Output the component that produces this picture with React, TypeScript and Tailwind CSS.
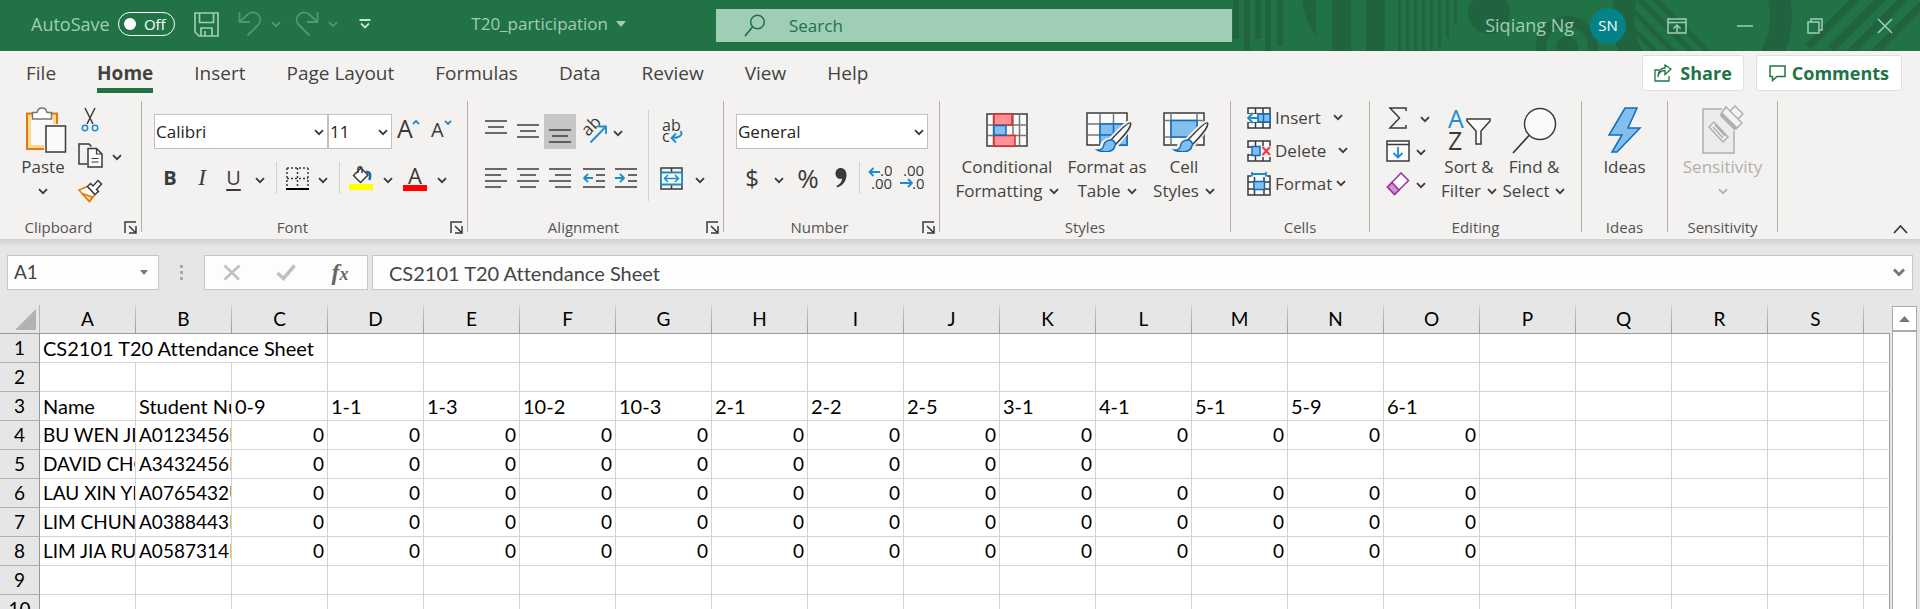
import React from "react";

const INK = "#3b3a39";
const BLUE = "#1e8bcd";

type IconProps = { w: number; h: number; children: React.ReactNode; className?: string };

function Icon({ w, h, children, className = "" }: IconProps) {
  return (
    <svg
      width={w}
      height={h}
      viewBox={`0 0 ${w} ${h}`}
      fill="none"
      stroke={INK}
      strokeWidth="1.5"
      className={`shrink-0 ${className}`}
      aria-hidden="true"
    >
      {children}
    </svg>
  );
}

function Chevron({ color = INK, className = "" }: { color?: string; className?: string }) {
  return (
    <Icon w={10} h={7} className={className}>
      <path d="M1 1.200 5 5.200 9 1.200" stroke={color} strokeWidth="1.800" />
    </Icon>
  );
}

function Drop({ label, className = "w-[22px]" }: { label: string; className?: string }) {
  return (
    <button type="button" aria-label={label} className={`flex h-8 shrink-0 items-center justify-center pt-1 ${className}`}>
      <Chevron />
    </button>
  );
}

function Tool({ label, className = "w-8", children }: { label: string; className?: string; children: React.ReactNode }) {
  return (
    <button type="button" aria-label={label} className={`flex h-8 shrink-0 items-center justify-center ${className}`}>
      {children}
    </button>
  );
}

function Launcher({ name }: { name: string }) {
  return (
    <button type="button" aria-label={`${name} settings`} className="flex h-5 w-6 shrink-0 items-center pl-[7px]">
      <Icon w={13} h={13}>
        <path d="M1 12V1h11M12 5v7H5M5 5l6 6" />
      </Icon>
    </button>
  );
}

type GroupProps = {
  name: string;
  width: string;
  launcher?: boolean;
  children: React.ReactNode;
};

function Group({ name, width, launcher = false, children }: GroupProps) {
  return (
    <>
      <section aria-label={name} className={`flex shrink-0 flex-col ${width}`}>
        <div className="h-[116px]">{children}</div>
        <div className="flex h-5 items-center">
          <span className="flex-1 text-center text-[15px] leading-5 text-[#555453]">{name}</span>
          {launcher && <Launcher name={name} />}
        </div>
      </section>
      <div className="h-[131px] w-px shrink-0 bg-[#b3b0ad]" />
    </>
  );
}

type BigProps = {
  lines: string[];
  width: string;
  icon: React.ReactNode;
  drop?: "inline" | "below";
  disabled?: boolean;
};

function BigButton({ lines, width, icon, drop, disabled = false }: BigProps) {
  return (
    <button
      type="button"
      disabled={disabled}
      className={`flex shrink-0 flex-col items-center pt-[6px] text-[17px] leading-6 whitespace-nowrap ${width} ${
        disabled ? "text-[#b1afad]" : "text-[#444342]"
      }`}
    >
      <span className="mb-[2px] flex h-[46px] items-center justify-center">{icon}</span>
      {lines.map((line, i) => (
        <span key={line} className="flex items-center gap-[6px]">
          {line}
          {drop === "inline" && i === lines.length - 1 && <Chevron />}
        </span>
      ))}
      {drop === "below" && (
        <span className="flex h-6 items-center">
          <Chevron color={disabled ? "#b1afad" : INK} />
        </span>
      )}
    </button>
  );
}

function Combo({ label, value, width }: { label: string; value: string; width: string }) {
  return (
    <div className={`relative h-[35px] shrink-0 ${width}`}>
      <select
        aria-label={label}
        className="h-full w-full appearance-none border border-[#c3c1bf] bg-white px-px text-[17px] text-[#252423]"
      >
        <option>{value}</option>
      </select>
      <Chevron className="pointer-events-none absolute top-[15px] right-1" />
    </div>
  );
}

function Lines({ rows, w = 22, h = 22 }: { rows: [number, number, number][]; w?: number; h?: number }) {
  return (
    <Icon w={w} h={h}>
      {rows.map(([x1, x2, y]) => (
        <path key={y} d={`M${x1} ${y}H${x2}`} />
      ))}
    </Icon>
  );
}

function TitlePattern() {
  const bars = [
    [1, 6, 39], [12, 6, 50], [23, 6, 39], [33, 6, 51], [45, 6, 46],
    [100, 19, 51], [134, 19, 51],
    [166, 3, 51], [174, 3, 51], [182, 3, 51], [190, 3, 51], [198, 3, 51], [206, 3, 47], [214, 3, 38], [222, 3, 23],
  ];
  return (
    <svg width="688" height="51" viewBox="0 0 688 51" className="absolute top-0 left-0" aria-hidden="true">
      <g fill="#22633f">
        {bars.map(([x, w, h]) => (
          <rect key={x} x={x} y="0" width={w} height={h} />
        ))}
        <path d="M70 0H84V36C77 27 72 14 70 0Z" />
        <circle cx="257" cy="13" r="21" />
        <circle cx="335" cy="47" r="11" />
      </g>
      <g fill="none" stroke="#22633f">
        <circle cx="335" cy="47" r="26" strokeWidth="10" />
        <circle cx="470" cy="17" r="79" strokeWidth="22" />
        <path d="M400 10 443 53M400-8 461 53M416-8 477 53M394 22 425 53" strokeWidth="5" />
        <path d="M576 47 626-3M599 49 651-3M618 53 674-3M642 53 690 5" strokeWidth="8" />
      </g>
    </svg>
  );
}

function TitleBar() {
  return (
    <header className="grid h-[51px] shrink-0 grid-cols-[716fr_516fr_688fr] items-center bg-[#217346] text-[17px] text-[#a0cdb5]">
      <div className="flex items-center pb-[3px]">
        <label className="ml-[31px] flex items-center gap-2 text-[18px]">
          AutoSave
          <input type="checkbox" role="switch" className="peer sr-only" />
          <span className="flex h-6 w-[57px] items-center justify-between rounded-full border-[1.5px] border-white pr-2 pl-[5px] text-[15px] text-white">
            <span className="size-3 rounded-full bg-white" />
            Off
          </span>
        </label>
        <button type="button" aria-label="Save" className="ml-[19px]">
          <Icon w={25} h={25}>
            <path d="M1 1H24V24H5L1 20ZM5.500 1V10.500H19.500V1M7 24V16H18V24M11 24V19" stroke="#a0cdb5" strokeWidth="1.700" />
          </Icon>
        </button>
        <button type="button" aria-label="Undo" className="ml-[19px] flex items-center gap-[9px]">
          <Icon w={24} h={26}>
            <path d="M1.500 1V11H12M2 10.500 9 4C13 0 18 1 20.500 4C23 7 23 11 20 14L9.500 24.500" stroke="#4c9a6e" strokeWidth="1.800" />
          </Icon>
          <Chevron color="#4c9a6e" />
        </button>
        <button type="button" aria-label="Redo" className="ml-[14px] flex items-center gap-[9px]">
          <Icon w={24} h={26}>
            <path d="M22.500 1V11H12M22 10.500 15 4C11 0 6 1 3.500 4C1 7 1 11 4 14L14.500 24.500" stroke="#4c9a6e" strokeWidth="1.800" />
          </Icon>
          <Chevron color="#4c9a6e" />
        </button>
        <button type="button" aria-label="Customize toolbar" className="ml-[21px]">
          <Icon w={12} h={10}>
            <path d="M0.500 1H11.500M2 4.500 6 8.500 10 4.500" stroke="#c4e2d0" strokeWidth="1.800" />
          </Icon>
        </button>
        <button type="button" className="mr-[90px] ml-auto flex items-center gap-2">
          T20_participation
          <Icon w={10} h={6}>
            <path d="M0 0H10L5 6Z" fill="#a0cdb5" stroke="none" />
          </Icon>
        </button>
      </div>
      <label className="flex h-[33px] items-center gap-[23px] bg-[#a0cdb5] pl-7">
        <Icon w={22} h={23}>
          <circle cx="13.500" cy="8" r="6.800" stroke="#217346" />
          <path d="M8.500 13 1 22" stroke="#217346" strokeWidth="1.800" />
        </Icon>
        <input
          type="search"
          aria-label="Search"
          placeholder="Search"
          className="min-w-0 flex-1 bg-transparent text-[17px] text-[#217346] outline-none placeholder:text-[#217346]"
        />
      </label>
      <div className="relative h-full overflow-hidden">
        <TitlePattern />
        <div className="relative flex h-full items-center justify-end">
          <span className="text-[18px]">Siqiang Ng</span>
          <span className="mr-[18px] ml-4 flex size-9 items-center justify-center rounded-full bg-[#038387] text-[15px] text-white">
            SN
          </span>
          <button type="button" aria-label="Ribbon display options" className="flex w-[66px] justify-center">
            <Icon w={20} h={16}>
              <path d="M1 1H19V15H1ZM1 4.500H19M10 14V7.500M6.500 10.500 10 7 13.500 10.500" stroke="#a0cdb5" />
            </Icon>
          </button>
          <button type="button" aria-label="Minimize" className="flex w-[70px] justify-center">
            <Icon w={16} h={2}>
              <path d="M0 1H16" stroke="#a0cdb5" />
            </Icon>
          </button>
          <button type="button" aria-label="Restore" className="flex w-[70px] justify-center">
            <Icon w={16} h={16}>
              <path d="M1 4H12V15H1ZM4 4V1H15V12H12" stroke="#a0cdb5" />
            </Icon>
          </button>
          <button type="button" aria-label="Close" className="flex w-[70px] justify-center">
            <Icon w={16} h={16}>
              <path d="M1 1 15 15M15 1 1 15" stroke="#a0cdb5" />
            </Icon>
          </button>
        </div>
      </div>
    </header>
  );
}

const TABS = ["File", "Home", "Insert", "Page Layout", "Formulas", "Data", "Review", "View", "Help"];

function TabRow() {
  return (
    <div className="flex h-11 shrink-0 items-start justify-between bg-[#f3f2f1] pr-[18px] pl-[26px]">
      <nav className="flex h-[42px] gap-[41px] text-[19px] text-[#444342]">
        {TABS.map((tab) => (
          <a
            key={tab}
            href={`#${tab.toLowerCase().replace(" ", "-")}`}
            className={
              tab === "Home"
                ? "flex items-center border-b-[5px] border-[#217346] pt-2 font-bold"
                : "flex items-center border-b-[5px] border-transparent pt-2"
            }
          >
            {tab}
          </a>
        ))}
      </nav>
      <div className="flex gap-3 pt-1 text-[18px] font-bold text-[#217346]">
        <button type="button" className="flex h-9 items-center gap-2 rounded-[3px] border border-[#e1dfdd] bg-white px-[11px]">
          <Icon w={18} h={18}>
            <path d="M5 6H1V17H15V12M4 13C4.500 8 7 6.500 11 6.500V10.500L17 5 11 1V4C6 4 4 8 4 13Z" stroke="#217346" strokeWidth="1.300" />
          </Icon>
          Share
        </button>
        <button type="button" className="flex h-9 items-center gap-[6px] rounded-[3px] border border-[#e1dfdd] bg-white px-3">
          <Icon w={17} h={17}>
            <path d="M1 1H16V11.500H8L3.500 15.500V11.500H1Z" stroke="#217346" />
          </Icon>
          Comments
        </button>
      </div>
    </div>
  );
}

function PasteIcon() {
  return (
    <Icon w={42} h={46} className="ml-[6px]">
      <path d="M2 6.500H32V42H2Z" fill="#fbd98d" stroke="#e07a10" strokeWidth="2" />
      <path d="M6 10H28V38H6Z" fill="#fafafa" stroke="none" />
      <path d="M7.500 12V5.500H12C12.500 2.500 14 1 17 1S21.500 2.500 22 5.500H26.500V12Z" fill="#fff" stroke="#797775" />
      <path d="M19 17H41V46H19Z" fill="#f3f2f1" stroke="none" />
      <path d="M21 19H40.500V45H21Z" fill="#fafafa" />
    </Icon>
  );
}

function Clipboard() {
  return (
    <Group name="Clipboard" width="w-[141px]" launcher>
      <div className="flex pl-[18px]">
        <BigButton lines={["Paste"]} width="w-[50px]" drop="below" icon={<PasteIcon />} />
        <div className="ml-[6px] flex flex-col">
          <button type="button" aria-label="Cut" className="flex h-9 w-8 items-center justify-center">
            <Icon w={18} h={25}>
              <path d="M4 1 12 17M14 1 6 17" />
              <circle cx="4" cy="21" r="2.700" stroke={BLUE} />
              <circle cx="14" cy="21" r="2.700" stroke={BLUE} />
            </Icon>
          </button>
          <div className="flex h-9 items-center">
            <Tool label="Copy">
              <Icon w={25} h={25}>
                <path d="M9 21H1V1H11L13.500 3.500" />
                <path d="M10 5.500H18.500L24 11V24H10Z" fill="#fafafa" />
                <path d="M18.500 5.500V11H24M13.500 15.500H20.500M13.500 19H20.500" strokeWidth="1.200" />
              </Icon>
            </Tool>
            <Drop label="Copy options" />
          </div>
          <button type="button" aria-label="Format painter" className="flex h-9 w-8 items-center justify-center">
            <Icon w={25} h={24}>
              <path d="M1 11 9.500 7.500 17 15.500 11.500 22.500Z" fill="#fff" stroke="#e07a10" />
              <path d="M4 14.500 14.500 18 11.500 22.500Z" fill="#fbd98d" stroke="#e07a10" />
              <path d="M9.500 7.500 12.500 4.500 15 7 20 1.500 23.500 5 18.500 10.500 20.500 12.500 17 15.500Z" fill="#fff" />
            </Icon>
          </button>
        </div>
      </div>
    </Group>
  );
}

function FontGroup() {
  return (
    <Group name="Font" width="w-[325px]" launcher>
      <div className="flex flex-col gap-[13px] pt-[13px] pl-3 text-[#3b3a39]">
        <div className="flex">
          <Combo label="Font family" value="Calibri" width="w-[174px]" />
          <Combo label="Font size" value="11" width="w-16" />
          <button type="button" aria-label="Increase font size" className="ml-[5px] flex w-[34px] items-start text-[25px] leading-7">
            A
            <Icon w={8} h={5} className="mt-[6px] -ml-px">
              <path d="M1 4 4 1 7 4" stroke={BLUE} strokeWidth="1.800" />
            </Icon>
          </button>
          <button type="button" aria-label="Decrease font size" className="flex w-8 items-start text-[20px] leading-8">
            A
            <Icon w={8} h={5} className="mt-[6px]">
              <path d="M1 1 4 4 7 1" stroke={BLUE} strokeWidth="1.800" />
            </Icon>
          </button>
        </div>
        <div className="flex items-center text-[20px] leading-7">
          <Tool label="Bold">
            <b>B</b>
          </Tool>
          <Tool label="Italic">
            <i className="font-['Liberation_Serif',serif] text-[23px]">I</i>
          </Tool>
          <Tool label="Underline" className="w-[31px]">
            <span className="underline underline-offset-4">U</span>
          </Tool>
          <Drop label="Underline options" />
          <div className="mx-[5px] h-8 w-px bg-[#d2d0ce]" />
          <Tool label="Bottom border" className="w-[30px]">
            <Icon w={23} h={23}>
              <path d="M1 1H22M1 1V20M22 1V20M11.500 1V20M1 11.500H22" strokeDasharray="2 2" />
              <path d="M0 22H23" stroke="#000" strokeWidth="2" />
            </Icon>
          </Tool>
          <Drop label="Border options" />
          <div className="mx-[5px] h-8 w-px bg-[#d2d0ce]" />
          <Tool label="Fill color">
            <Icon w={24} h={26}>
              <path d="M12 3 19 10 11.500 17.500 4.500 10.500ZM9 8V4C9 1 13 1 13 4V8" fill="#fafafa" />
              <path d="M17 7C21 6.500 22 9 20.500 15" stroke="#1a66ad" strokeWidth="2.500" />
              <path d="M0 19H24V25H0Z" fill="#ffff00" stroke="none" />
            </Icon>
          </Tool>
          <Drop label="Fill color options" />
          <Tool label="Font color">
            <span className="flex flex-col items-center">
              <span className="text-[22px] leading-5">A</span>
              <span className="h-[6px] w-6 bg-[#ff0000]" />
            </span>
          </Tool>
          <Drop label="Font color options" />
        </div>
      </div>
    </Group>
  );
}

function AlignmentGroup() {
  return (
    <Group name="Alignment" width="w-[255px]" launcher>
      <div className="flex pl-3">
        <div className="flex w-[168px] flex-col gap-[13px] pt-[13px]">
          <div className="flex h-[35px] items-center">
            <Tool label="Top align" className="w-8 pb-1">
              <Lines rows={[[0, 22, 2], [3, 19, 8], [0, 22, 14]]} />
            </Tool>
            <Tool label="Middle align">
              <Lines rows={[[0, 22, 4], [3, 19, 10], [0, 22, 16]]} />
            </Tool>
            <button type="button" aria-label="Bottom align" className="flex h-[35px] w-8 items-center justify-center bg-[#c8c6c4] pt-1">
              <Lines rows={[[0, 22, 7], [3, 19, 13], [0, 22, 19]]} />
            </button>
            <Tool label="Orientation" className="w-9">
              <Icon w={25} h={25}>
                <text x="0" y="0" transform="translate(6 18) rotate(-45)" fontSize="17" fill={INK} stroke="none">
                  ab
                </text>
                <path d="M8.500 23.500 23.500 8M16.500 7.500H24V15" stroke={BLUE} strokeWidth="1.800" />
              </Icon>
            </Tool>
            <Drop label="Orientation options" className="w-[11px]" />
          </div>
          <div className="flex items-center">
            <Tool label="Align left">
              <Lines rows={[[0, 22, 2], [0, 16, 8], [0, 22, 14], [0, 16, 20]]} />
            </Tool>
            <Tool label="Center">
              <Lines rows={[[0, 22, 2], [3, 19, 8], [0, 22, 14], [3, 19, 20]]} />
            </Tool>
            <Tool label="Align right">
              <Lines rows={[[0, 22, 2], [6, 22, 8], [0, 22, 14], [6, 22, 20]]} />
            </Tool>
            <Tool label="Decrease indent" className="w-9">
              <Icon w={22} h={22}>
                <path d="M0 2H22M13 8H22M13 14H22M0 20H22" />
                <path d="M1 11H10M5 7 1 11 5 15" stroke={BLUE} strokeWidth="1.800" />
              </Icon>
            </Tool>
            <Tool label="Increase indent" className="w-7">
              <Icon w={22} h={22}>
                <path d="M0 2H22M13 8H22M13 14H22M0 20H22" />
                <path d="M0 11H9M5 7 9 11 5 15" stroke={BLUE} strokeWidth="1.800" />
              </Icon>
            </Tool>
          </div>
        </div>
        <div className="mt-[9px] mr-1 h-[91px] w-px bg-[#d2d0ce]" />
        <div className="flex flex-col gap-[13px] pt-[13px]">
          <div className="flex h-[35px] items-center">
            <Tool label="Wrap text" className="w-[38px]">
              <Icon w={22} h={28}>
                <text x="1" y="13" fontSize="16" fill={INK} stroke="none">
                  ab
                </text>
                <text x="1" y="24" fontSize="16" fill={INK} stroke="none">
                  c
                </text>
                <path d="M19.500 13C22.500 17 18 20 11 20M15 15.500 10.500 20 15 24.500" stroke={BLUE} strokeWidth="1.800" />
              </Icon>
            </Tool>
          </div>
          <div className="flex items-center">
            <Tool label="Merge and center" className="w-9">
              <Icon w={23} h={23}>
                <path d="M1 1H22V22H1ZM11.500 1V5M11.500 18V22" />
                <path d="M1 5.500H22V17.500H1Z" fill="#fafafa" stroke={BLUE} strokeWidth="1.800" />
                <path d="M4.500 11.500H18.500M8 8 4.500 11.500 8 15M15 8 18.500 11.500 15 15" stroke={BLUE} />
              </Icon>
            </Tool>
            <Drop label="Merge options" />
          </div>
        </div>
      </div>
    </Group>
  );
}

function NumberGroup() {
  return (
    <Group name="Number" width="w-[215px]" launcher>
      <div className="flex flex-col gap-[13px] pt-[13px] pl-3 text-[#3b3a39]">
        <Combo label="Number format" value="General" width="w-48" />
        <div className="flex items-center">
          <Tool label="Accounting format">
            <span className="text-[24px] leading-8">$</span>
          </Tool>
          <Drop label="Accounting options" />
          <Tool label="Percent style" className="w-9">
            <span className="text-[26px] leading-8">%</span>
          </Tool>
          <Tool label="Comma style" className="w-[29px]">
            <Icon w={12} h={20}>
              <path d="M5.500 0C9 0 11.500 2.500 11.500 7C11.500 13 7.500 18 2 19.500L1.500 18C5 16.500 7 13.500 7 10.500C3.500 12 0.500 9 0.500 5.500C0.500 2.500 2.500 0 5.500 0Z" fill={INK} stroke="none" />
            </Icon>
          </Tool>
          <div className="mx-1 h-8 w-px bg-[#d2d0ce]" />
          <Tool label="Increase decimal">
            <Icon w={24} h={26}>
              <text x="12" y="11" fontSize="15" fill={INK} stroke="none">.0</text>
              <text x="3" y="24" fontSize="15" fill={INK} stroke="none">.00</text>
              <path d="M1 7H12M5.500 3 1.500 7 5.500 11" stroke={BLUE} strokeWidth="1.800" />
            </Icon>
          </Tool>
          <Tool label="Decrease decimal">
            <Icon w={24} h={26}>
              <text x="3" y="11" fontSize="15" fill={INK} stroke="none">.00</text>
              <text x="12" y="24" fontSize="15" fill={INK} stroke="none">.0</text>
              <path d="M0 18H12M8 14 12 18 8 22" stroke={BLUE} strokeWidth="1.800" />
            </Icon>
          </Tool>
        </div>
      </div>
    </Group>
  );
}

function Brush() {
  return (
    <>
      <path d="M46 10.500C43 9.500 40 11.500 24 28C18 29 15.500 32 15 37C14 39 12 40 10 40.500C18 43.500 28 42 31 34C40 24 46 16 46 10.500Z" fill="#f3f2f1" stroke="#f3f2f1" strokeWidth="3" />
      <path d="M44.500 12C42.500 10.500 35 18 25 29L29.500 33.500C38 25 46 15 44.500 12Z" fill="#fafafa" />
      <path d="M25 29C19 29 18 32 17.500 35C17 38 14.500 39 11.500 39C16 41.500 27 42 28.500 36C29 34.500 29.500 34 29.500 33.500C29 31 27 29 25 29Z" fill="#83beec" stroke="#0f6cbd" />
    </>
  );
}

function StylesGroup() {
  return (
    <Group name="Styles" width="w-[290px]">
      <div className="flex pl-[13px]">
        <BigButton
          lines={["Conditional", "Formatting"]}
          width="w-[108px]"
          drop="inline"
          icon={
            <Icon w={42} h={42}>
              <path d="M1 5H41V37H1Z" fill="#fafafa" />
              <path d="M7.500 5V37M33.500 5V37M27 5V37M1 16H41M1 26.500H41" stroke="#797775" />
              <path d="M8 5H26V16H8ZM8 26.500H29V37H8Z" fill="#ff9196" stroke="#d92b20" />
              <path d="M8 16.500H20V26H8Z" fill="#83beec" stroke="#0f6cbd" />
            </Icon>
          }
        />
        <BigButton
          lines={["Format as", "Table"]}
          width="w-[92px]"
          drop="inline"
          icon={
            <Icon w={46} h={44} className="ml-1">
              <path d="M1 5H41V37H1Z" fill="#fafafa" />
              <path d="M1 16H41M1 27H41M14 5V37M27.500 5V37" stroke="#797775" />
              <path d="M14 16H41V37H14Z" fill="#83beec" stroke="#0f6cbd" />
              <path d="M14 27H41M27.500 16V37" stroke="#0f6cbd" />
              <g transform="translate(0 3)">
                <Brush />
              </g>
            </Icon>
          }
        />
        <BigButton
          lines={["Cell", "Styles"]}
          width="w-[62px]"
          drop="inline"
          icon={
            <Icon w={46} h={44} className="ml-1">
              <path d="M1 5H41V37H1Z" fill="#fafafa" />
              <path d="M1 12.500H41M1 29H41M8 5V37M34 5V37" stroke="#797775" />
              <path d="M8 12.500H34V29H8Z" fill="#83beec" stroke="#0f6cbd" />
              <g transform="translate(0 3)">
                <Brush />
              </g>
            </Icon>
          }
        />
      </div>
    </Group>
  );
}

function CellsGroup() {
  const row = "flex h-[33px] items-center gap-1";
  return (
    <Group name="Cells" width="w-[138px]">
      <div className="flex flex-col items-start pl-4 text-[17px] text-[#444342]">
        <button type="button" className={row}>
          <Icon w={24} h={22}>
            <path d="M1 1H23V21H1ZM8.500 1V21M16 1V21M1 7H23M1 15H23" fill="#fafafa" />
            <path d="M0 7H12V15H0Z" fill="#f3f2f1" stroke="none" />
            <path d="M11 7H23V15H11ZM16.500 7V15" fill="#83beec" stroke="#0f6cbd" />
            <path d="M1 11H11M6 6 1 11 6 16" stroke={BLUE} strokeWidth="1.800" />
          </Icon>
          Insert
          <Chevron className="ml-2" />
        </button>
        <button type="button" className={row}>
          <Icon w={24} h={22}>
            <path d="M1 1H23V21H1ZM8.500 1V21M16 1V21M1 7H23M1 15H23" fill="#fafafa" />
            <path d="M0 8H4V14H0ZM13 6H24V17H13Z" fill="#f3f2f1" stroke="none" />
            <path d="M5 6.500H13V15.500H5Z" fill="#83beec" stroke="#0f6cbd" />
            <path d="M15.500 7 23 15M23 7 15.500 15" stroke="#e8383d" strokeWidth="2" />
          </Icon>
          Delete
          <Chevron className="ml-2" />
        </button>
        <button type="button" className={row}>
          <Icon w={24} h={24}>
            <path d="M1 4H23V23H1ZM7.500 4V23M17 4V23M1 10H23M1 17H23" fill="#fafafa" />
            <path d="M4 0H20V5H4Z" fill="#f3f2f1" stroke="none" />
            <path d="M7 9.500H17.500V17.500H7Z" fill="#83beec" stroke="#0f6cbd" />
            <path d="M5 2H19M5 0V4.500M19 0V4.500" stroke={BLUE} strokeWidth="1.800" />
          </Icon>
          Format
          <Chevron />
        </button>
      </div>
    </Group>
  );
}

function EditingGroup() {
  return (
    <Group name="Editing" width="w-[211px]">
      <div className="flex pl-3">
        <div className="flex w-[54px] flex-col">
          <div className="flex h-[33px] items-center">
            <Tool label="AutoSum">
              <Icon w={20} h={22}>
                <path d="M18 4V1H2L11.500 11 2 21H18V18" />
              </Icon>
            </Tool>
            <Drop label="AutoSum options" />
          </div>
          <div className="flex h-[33px] items-center">
            <Tool label="Fill">
              <Icon w={24} h={22}>
                <path d="M1 1H23V21H1ZM1 4.500H23" fill="#fafafa" />
                <path d="M12 7V17.500M7.500 13 12 17.500 16.500 13" stroke={BLUE} strokeWidth="1.800" />
              </Icon>
            </Tool>
            <Drop label="Fill options" className="w-[14px]" />
          </div>
          <div className="flex h-[33px] items-center">
            <Tool label="Clear">
              <Icon w={24} h={24}>
                <path d="M15 1 22.500 8.500 8.500 22.500 1.500 15Z" fill="#fff" stroke="#9a2f9f" />
                <path d="M6 10.500 13 18 8.500 22.500 1.500 15Z" fill="#d48fd6" stroke="#9a2f9f" />
              </Icon>
            </Tool>
            <Drop label="Clear options" className="w-[14px]" />
          </div>
        </div>
        <BigButton
          lines={["Sort &", "Filter"]}
          width="w-[66px]"
          drop="inline"
          icon={
            <Icon w={43} h={46}>
              <text x="0" y="21" fontSize="25" fill={BLUE} stroke="none">A</text>
              <text x="0" y="43" fontSize="25" fill={INK} stroke="none">Z</text>
              <path d="M19 12H42V14L33 24V37H28V24L19 14Z" fill="#fafafa" />
            </Icon>
          }
        />
        <BigButton
          lines={["Find &", "Select"]}
          width="w-16"
          drop="inline"
          icon={
            <Icon w={45} h={47}>
              <circle cx="28" cy="17" r="15.500" fill="#fafafa" />
              <path d="M17 28.500 1 46" strokeWidth="1.800" />
            </Icon>
          }
        />
      </div>
    </Group>
  );
}

function Ribbon() {
  return (
    <div className="flex h-36 shrink-0 items-start bg-[#f3f2f1] pt-[6px]">
      <Clipboard />
      <FontGroup />
      <AlignmentGroup />
      <NumberGroup />
      <StylesGroup />
      <CellsGroup />
      <EditingGroup />
      <Group name="Ideas" width="w-[85px]">
        <BigButton
          lines={["Ideas"]}
          width="w-full"
          icon={
            <Icon w={34} h={46}>
              <path d="M17 1H29L20 21H32L9 45H4L14 28H1Z" fill="#83beec" stroke="#0f6cbd" />
            </Icon>
          }
        />
      </Group>
      <Group name="Sensitivity" width="w-[109px]">
        <BigButton
          lines={["Sensitivity"]}
          width="w-full"
          drop="below"
          disabled
          icon={
            <Icon w={42} h={50}>
              <g stroke="#b1afad">
                <path d="M20 4H1V48H32V26" fill="#eeecea" />
                <path d="M7 22 12 17 26 32 21 37ZM11 22 21 33M13 20 23 31" fill="#f3f2f1" />
                <path d="M19 9 24 2 28 6 33 1 41 9 36 14 40 18 34 24Z" fill="#f3f2f1" />
                <path d="M19 9 34 24" strokeWidth="4" />
                <path d="M28 6 36 14" />
              </g>
            </Icon>
          }
        />
      </Group>
      <button type="button" aria-label="Collapse ribbon" className="mt-[123px] mr-3 ml-auto">
        <Icon w={15} h={10}>
          <path d="M1 9 7.500 2 14 9" strokeWidth="1.800" />
        </Icon>
      </button>
    </div>
  );
}

function FormulaBar() {
  const box = "flex h-full items-center border border-[#c6c6c6] bg-[#fdfdfd]";
  return (
    <div className="flex h-[66px] shrink-0 items-start bg-[linear-gradient(#d0d0d0,#e6e6e6_8px)] px-[7px] pt-4 font-[Lato,sans-serif] text-[20px] text-[#444444] [font-variant-ligatures:none]">
      <div className="flex h-[35px] flex-1">
        <div className={`${box} w-[152px] pr-[10px] pl-[6px]`}>
          <input aria-label="Name box" defaultValue="A1" className="w-full min-w-0 bg-transparent text-[19px] outline-none" />
          <button type="button" aria-label="Name list">
            <Icon w={8} h={5}>
              <path d="M0 0H8L4 5Z" fill="#777" stroke="none" />
            </Icon>
          </button>
        </div>
        <div className="flex w-[45px] items-center justify-center">
          <Icon w={3} h={15}>
            <path d="M0 0H3V3H0ZM0 6H3V9H0ZM0 12H3V15H0Z" fill="#ababab" stroke="none" />
          </Icon>
        </div>
        <div className={`${box} w-[164px]`}>
          <button type="button" aria-label="Cancel" className="flex w-[54px] justify-center">
            <Icon w={18} h={17}>
              <path d="M1.500 1.500 16 15.500M16.500 1.500 1.500 15.500" stroke="#c0c0c0" strokeWidth="2.500" />
            </Icon>
          </button>
          <button type="button" aria-label="Enter" className="flex w-[54px] justify-center">
            <Icon w={20} h={17}>
              <path d="M1.500 9 7.500 14.500 18.500 1.500" stroke="#c0c0c0" strokeWidth="3.500" />
            </Icon>
          </button>
          <button type="button" aria-label="Insert function" className="flex w-[54px] items-baseline justify-center font-['Liberation_Serif',serif] leading-8 font-bold text-[#666666] italic">
            <span className="text-[24px]">f</span>
            <span className="text-[18px]">x</span>
          </button>
        </div>
        <div className={`${box} ml-1 flex-1 pr-[7px] pl-4`}>
          <input
            aria-label="Formula bar"
            defaultValue="CS2101 T20 Attendance Sheet"
            className="min-w-0 flex-1 bg-transparent outline-none"
          />
          <button type="button" aria-label="Expand formula bar">
            <Icon w={12} h={9}>
              <path d="M1 1.500 6 6.500 11 1.500" stroke="#777777" strokeWidth="3" />
            </Icon>
          </button>
        </div>
      </div>
    </div>
  );
}

const COLUMNS = "ABCDEFGHIJKLMNOPQRS".split("");

const zeros = (n: number) => Array<number>(n).fill(0);

const ROWS: (string | number)[][] = [
  ["CS2101 T20 Attendance Sheet"],
  [],
  ["Name", "Student Number", "0-9", "1-1", "1-3", "10-2", "10-3", "2-1", "2-2", "2-5", "3-1", "4-1", "5-1", "5-9", "6-1"],
  ["BU WEN JIE", "A0123456H", ...zeros(13)],
  ["DAVID CHONG", "A3432456H", ...zeros(9)],
  ["LAU XIN YEE", "A0765432U", ...zeros(13)],
  ["LIM CHUNG", "A0388443H", ...zeros(13)],
  ["LIM JIA RUI", "A0587314H", ...zeros(13)],
  [],
  [],
];

const HEADING_ROWS = [0, 2];

function Sheet() {
  return (
    <div className="flex min-h-0 flex-1 bg-[#e6e6e6]">
      <div className="min-w-0 flex-1 overflow-hidden">
        <table className="w-full table-fixed border-separate border-spacing-0 bg-white font-[Lato,sans-serif] text-[19px] leading-7 text-black [font-variant-ligatures:none]">
          <colgroup>
            <col className="w-10" />
            {COLUMNS.map((c) => (
              <col key={c} className="w-24" />
            ))}
            <col />
          </colgroup>
          <thead>
            <tr className="h-[29px] bg-[#e6e6e6]">
              <th className="border-b border-[#999999] p-0 align-middle" aria-label="Select all">
                <div className="flex h-7 items-center justify-end border-r border-[#b5b5b5] pr-[3px]">
                  <Icon w={21} h={21}>
                    <path d="M21 0V21H0Z" fill="#b2b2b2" stroke="none" />
                  </Icon>
                </div>
              </th>
              {COLUMNS.map((c) => (
                <th key={c} scope="col" className="border-b border-[#999999] bg-[linear-gradient(#cfcfcf,#999999)] p-0 pr-px font-normal">
                  <div className="h-7 bg-[#e6e6e6] leading-7">{c}</div>
                </th>
              ))}
              <th className="border-b border-[#999999] p-0" />
            </tr>
          </thead>
          <tbody>
            {ROWS.map((row, r) => {
              const span = r === 0 ? 3 : 1;
              return (
                <tr key={r} className={HEADING_ROWS.includes(r) ? "h-[29px] text-[20px]" : "h-[29px]"}>
                  <th scope="row" className="border-r border-b border-r-[#999999] border-b-[#b0b0b0] bg-[#e6e6e6] p-0 text-[19px] font-normal">
                    <div className="h-7 leading-7">{r + 1}</div>
                  </th>
                  {COLUMNS.slice(span - 1).map((c, i) => {
                    const value = row[i];
                    return (
                      <td
                        key={c}
                        colSpan={i === 0 ? span : 1}
                        className={`border-r border-b border-[#d4d4d4] p-0 ${typeof value === "number" ? "text-right" : "text-left"}`}
                      >
                        <div className="h-7 overflow-hidden px-[3px] leading-7 whitespace-nowrap">{value}</div>
                      </td>
                    );
                  })}
                  <td className="border-r border-b border-r-[#999999] border-b-[#d4d4d4] p-0" />
                </tr>
              );
            })}
          </tbody>
        </table>
      </div>
      <div className="mt-px mr-[3px] ml-[2px] flex w-[25px] shrink-0 flex-col">
        <button type="button" aria-label="Scroll up" className="flex h-[25px] shrink-0 items-center justify-center border border-[#ababab] bg-white">
          <Icon w={11} h={6}>
            <path d="M5.500 0 11 6H0Z" fill="#777777" stroke="none" />
          </Icon>
        </button>
        <div className="flex-1 border border-b-0 border-[#ababab] bg-white" />
      </div>
    </div>
  );
}

export default function App() {
  return (
    <div className="flex h-screen flex-col overflow-hidden bg-[#e6e6e6] font-['Open_Sans',sans-serif]">
      <TitleBar />
      <TabRow />
      <Ribbon />
      <FormulaBar />
      <Sheet />
    </div>
  );
}
